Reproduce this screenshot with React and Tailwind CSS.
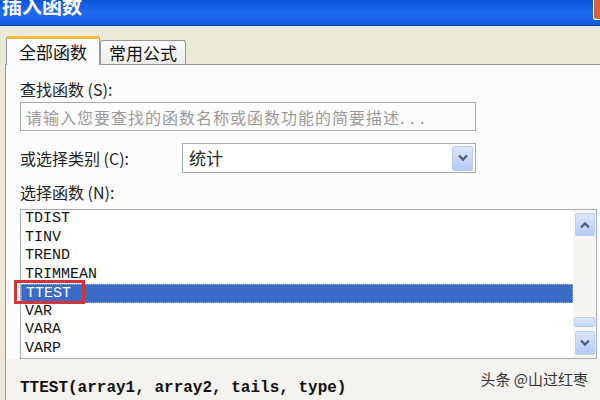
const items = ["TDIST", "TINV", "TREND", "TRIMMEAN", "TTEST", "VAR", "VARA", "VARP"];

function Chevron({ up }) {
  return (
    <svg width="12" height="8" viewBox="0 0 12 8">
      <path
        d={up ? "M2 6.5 L6 2.5 L10 6.5" : "M2 1.5 L6 5.5 L10 1.5"}
        fill="none"
        stroke="#4D6185"
        strokeWidth="2.4"
      />
    </svg>
  );
}

function ArrowButton({ up, className }) {
  return (
    <div
      className={
        "flex items-center justify-center rounded-[2px] border border-[#B9CBEF] bg-gradient-to-b from-[#DCE6FC] to-[#B6CAF5] " +
        className
      }
    >
      <Chevron up={up} />
    </div>
  );
}

export default function App() {
  const cjk = { fontFamily: '"Noto Sans CJK SC", "Liberation Sans", sans-serif' };
  return (
    <div className="w-[600px] h-[400px] overflow-hidden bg-[#ECE9D8] flex flex-col relative" style={cjk}>
      {/* title bar */}
      <div className="h-[26px] flex items-start bg-gradient-to-b from-[#0A54D8] via-[#1F6BEE] to-[#1259DC] border-b border-[#0B3FA8]">
        <span className="-mt-[7px] ml-[2px] text-[20px] font-bold text-white leading-[26px]">插入函数</span>
        <div className="ml-auto w-[7px] h-[20px] bg-[#D5633B] rounded-bl-[3px] border-l border-b border-white"></div>
      </div>

      {/* tabs */}
      <div className="h-[38px] flex items-end pl-[6px]">
        <div className="w-[94px] h-[29px] bg-[#FCFCFE] border border-[#919B9C] border-b-0 border-t-[3px] border-t-[#F5B940] rounded-t-[3px] flex items-center justify-center text-[17px] text-[#111] -mb-px z-10">
          全部函数
        </div>
        <div className="w-[86px] h-[24px] bg-gradient-to-b from-[#FEFEFE] to-[#ECEBE6] border border-[#919B9C] border-b-0 rounded-t-[3px] flex items-center justify-center text-[17px] text-[#111]">
          常用公式
        </div>
      </div>

      {/* tab panel */}
      <div className="flex-1 ml-[5px] bg-[#FCFCFD] border-t border-l border-[#919B9C] flex flex-col pl-[14px] pt-[14px]">
        <div className="text-[16px] leading-[20px] text-[#222]">查找函数 (S):</div>
        <div className="mt-[3px] w-[456px] h-[29px] border border-[#A5ACB2] flex items-center pl-[5px] text-[16px] text-[#9A9A9A] tracking-[1px] whitespace-nowrap overflow-hidden">
          请输入您要查找的函数名称或函数功能的简要描述. . .
        </div>

        <div className="mt-[12px] flex items-center h-[30px]">
          <div className="w-[162px] text-[16px] text-[#222]">或选择类别 (C):</div>
          <div className="w-[294px] h-[30px] border border-[#A5ACB2] flex items-center pl-[6px] pr-[2px] bg-white">
            <span className="text-[17px] text-[#222]">统计</span>
            <ArrowButton className="ml-auto w-[21px] h-[25px]" />
          </div>
        </div>

        <div className="mt-[9px] text-[16px] leading-[20px] text-[#222]">选择函数 (N):</div>

        <div className="relative mt-[7px] w-[577px] h-[150px] border border-[#A5ACB2] bg-white flex">
          <div className="flex-1 flex flex-col" style={{ fontFamily: '"Liberation Mono", monospace' }}>
            {items.map((it) => (
              <div
                key={it}
                className={
                  "h-[18.5px] leading-[18.5px] pl-[4px] text-[15px] " +
                  (it === "TTEST"
                    ? "bg-[#3A6BC6] text-white border border-dotted border-[#9BB2E0]"
                    : "text-[#111]")
                }
              >
                {it}
              </div>
            ))}
          </div>
          <div className="w-[23px] bg-[#F6F5EF] flex flex-col items-center py-[3px]">
            <ArrowButton up className="w-[20px] h-[23px]" />
            <div className="flex-1"></div>
            <div className="w-[21px] h-[10px] rounded-[2px] bg-gradient-to-b from-[#E2EAFC] to-[#C3D4F8] border border-[#B9CBEF]"></div>
            <ArrowButton className="mt-[4px] w-[20px] h-[24px]" />
          </div>
          <div className="absolute left-[-7px] top-[70px] w-[71px] h-[24px] border-[3px] border-[#D2343A]"></div>
        </div>

        <div className="flex-1 -ml-[14px] pl-[14px] bg-[#F4F3EF] flex items-end">
          <span className="text-[16px] leading-[24px] font-bold text-[#111]" style={{ fontFamily: '"Liberation Mono", monospace' }}>
            TTEST(array1, array2, tails, type)
          </span>
        </div>
      </div>

      <div className="absolute right-[12px] top-[368px] text-[15px] text-[#333]">头条 @山过红枣</div>
    </div>
  );
}
